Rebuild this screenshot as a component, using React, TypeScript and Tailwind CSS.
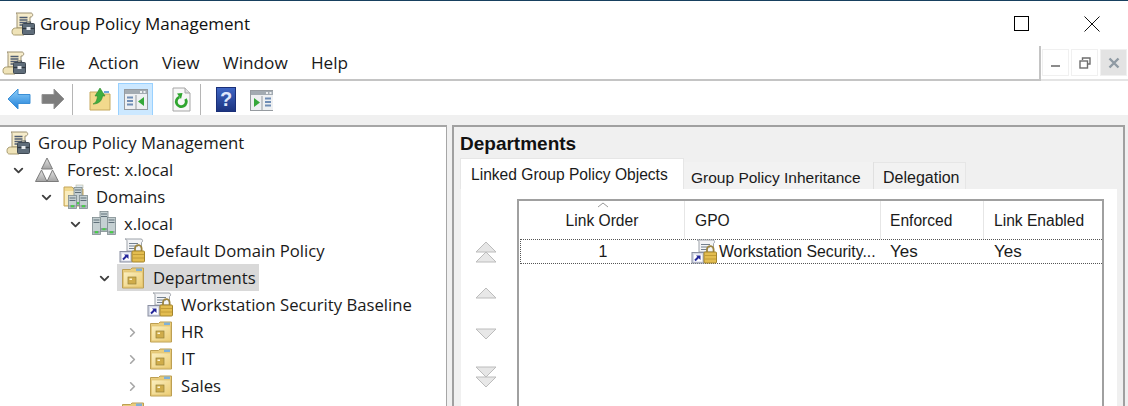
import React from 'react';
import { ChevronDown, ChevronRight } from 'lucide-react';

const ScrollIcon = ({ className = '' }: { className?: string }) => (
  <svg viewBox="0 0 24 24" width="24" height="24" className={className}>
    <path d="M5 1h15c2 0 2.500 3.500 0 4h-1v11H6V3.500C6 2 5.500 1 5 1z" fill="#f6eccb" stroke="#9c9071" strokeWidth="1" />
    <path d="M8.500 5.500h8M8.500 8h8M8.500 10.500h7M8.500 13h3" stroke="#4f5c72" strokeWidth="1.300" />
    <path d="M1 19.500c0-2 1.500-3.500 3.500-3.500H13v7H3.500C1.500 23 1 21.500 1 19.500z" fill="#efe3b8" stroke="#a99c70" strokeWidth="1" />
    <path d="M15.500 11.500v-1.500h4v1.500" fill="none" stroke="#4d5761" strokeWidth="1.200" />
    <rect x="11.500" y="11.500" width="12" height="11" rx="1" fill="#5f6d7a" stroke="#3e4852" strokeWidth="1" />
    <path d="M11.500 16.500h12" stroke="#2f3740" strokeWidth="1.200" />
    <rect x="15.500" y="15" width="4" height="3" fill="#e8ecef" />
  </svg>
);

const ForestIcon = () => (
  <svg viewBox="0 0 24 26" width="24" height="26">
    <defs>
      <linearGradient id="fr" x1="0" y1="0" x2="0" y2="1">
        <stop offset="0" stopColor="#e4e4e4" />
        <stop offset="1" stopColor="#a3a3a3" />
      </linearGradient>
    </defs>
    <path d="M12 1l5.500 11h-11z" fill="url(#fr)" stroke="#7c7c7c" strokeWidth="1" />
    <path d="M6.500 13L12 24.500H.5z" fill="url(#fr)" stroke="#7c7c7c" strokeWidth="1" />
    <path d="M17.500 13L23.500 24.500H12z" fill="url(#fr)" stroke="#7c7c7c" strokeWidth="1" />
  </svg>
);

const Server = ({ x, y, h = 14 }: { x: number; y: number; h?: number }) => (
  <g transform={`translate(${x} ${y})`}>
    <rect x="0" y="0" width="8" height={h} fill="#c5d0d2" stroke="#7d8a8e" strokeWidth="0.8" />
    <path d="M1 2.500h6M1 5h6" stroke="#60707a" strokeWidth="1.100" />
    <rect x="1" y={h - 3.500} width="6" height="2.500" fill="#8f9c9f" />
    <rect x="2.500" y={h - 3.300} width="3" height="2" fill="#45d045" />
  </g>
);

const ServersIcon = () => (
  <svg viewBox="0 0 24 25" width="24" height="25">
    <Server x={8} y={0.500} h={20} />
    <Server x={0.500} y={6.500} h={17} />
    <Server x={15.500} y={6.500} h={17} />
  </svg>
);

const DomainsIcon = () => (
  <svg viewBox="0 0 25 25" width="25" height="25">
    <path d="M1 3h8l2 2h9v17H1z" fill="#f1d98e" stroke="#c5a65a" strokeWidth="1" />
    <path d="M2 7h17v14H2z" fill="#f9ecbd" />
    <rect x="13" y="1" width="7" height="3" fill="#dfe9f0" stroke="#b9b9a0" strokeWidth="0.6" />
    <Server x={11} y={3.500} h={18} />
    <Server x={5.500} y={11.500} h={13} />
    <Server x={16.500} y={11.500} h={13} />
  </svg>
);

const FolderIcon = () => (
  <svg viewBox="0 0 24 24" width="24" height="24">
    <defs>
      <linearGradient id="fd" x1="0" y1="0" x2="1" y2="1">
        <stop offset="0" stopColor="#fbefc0" />
        <stop offset="1" stopColor="#eccd74" />
      </linearGradient>
    </defs>
    <path d="M1.500 3.500h8l1.500-1.500h11.500v20h-21z" fill="#e9cd7c" stroke="#bd9f52" strokeWidth="1" />
    <path d="M2.500 6h19v15h-19z" fill="url(#fd)" stroke="#e0c170" strokeWidth="0.7" />
    <rect x="15" y="2.500" width="6" height="2.500" fill="#7fb0d8" />
    <rect x="7" y="11" width="8" height="7" fill="#cfac4a" stroke="#94803a" strokeWidth="0.7" />
    <rect x="8.500" y="12.500" width="2.500" height="1.500" fill="#fdf6d8" />
  </svg>
);

const GpoLinkIcon = () => (
  <svg viewBox="0 0 26 25" width="26" height="25">
    <path d="M6 1h16c2 0 2 3 .5 3.500V13H8V3C8 2 7 1 6 1z" fill="#f3f4f6" stroke="#9da2a9" strokeWidth="1" />
    <path d="M10 5.500h9M10 8h9M10 10.500h6" stroke="#73808e" strokeWidth="1.200" />
    <rect x="1" y="13.500" width="12" height="10.500" fill="#d5d9e6" stroke="#8a8fa1" strokeWidth="1" />
    <rect x="3" y="15.500" width="8" height="7" fill="#ffffff" />
    <path d="M4 21.500l3.500-3.500" stroke="#23269a" strokeWidth="2" />
    <path d="M5 16.500h4.500V21z" fill="#23269a" />
    <path d="M16 13.500v-3a3.300 3.300 0 0 1 6.600 0v3" fill="none" stroke="#9c843f" strokeWidth="1.800" />
    <rect x="13" y="13" width="12.500" height="11" rx="1" fill="#e3bd50" stroke="#a3842c" strokeWidth="1" />
    <path d="M13.500 16.500h11.500M13.500 20h11.500" stroke="#c29c36" strokeWidth="1" />
  </svg>
);

type RowIcon = 'scroll' | 'forest' | 'domains' | 'servers' | 'gpo' | 'folder';

const iconFor = (icon: RowIcon) => {
  if (icon === 'scroll') return <ScrollIcon />;
  if (icon === 'forest') return <ForestIcon />;
  if (icon === 'domains') return <DomainsIcon />;
  if (icon === 'servers') return <ServersIcon />;
  if (icon === 'gpo') return <GpoLinkIcon />;
  return <FolderIcon />;
};

const rows: { label: string; icon: RowIcon; indent: string; arrow?: 'down' | 'right'; selected?: boolean }[] = [
  { label: 'Group Policy Management', icon: 'scroll', indent: 'pl-[6px]' },
  { label: 'Forest: x.local', icon: 'forest', indent: 'pl-[35px]', arrow: 'down' },
  { label: 'Domains', icon: 'domains', indent: 'pl-[63px]', arrow: 'down' },
  { label: 'x.local', icon: 'servers', indent: 'pl-[92px]', arrow: 'down' },
  { label: 'Default Domain Policy', icon: 'gpo', indent: 'pl-[119px]' },
  { label: 'Departments', icon: 'folder', indent: 'pl-[121px]', arrow: 'down', selected: true },
  { label: 'Workstation Security Baseline', icon: 'gpo', indent: 'pl-[147px]' },
  { label: 'HR', icon: 'folder', indent: 'pl-[149px]', arrow: 'right' },
  { label: 'IT', icon: 'folder', indent: 'pl-[149px]', arrow: 'right' },
  { label: 'Sales', icon: 'folder', indent: 'pl-[149px]', arrow: 'right' },
  { label: 'Group Policy Objects', icon: 'folder', indent: 'pl-[121px]' },
];

const TreeRow = ({ row }: { row: (typeof rows)[number] }) => (
  <div className={`h-[27px] shrink-0 flex items-center ${row.indent}`}>
    <div className={`relative flex items-center h-[27px] pr-[3px] -ml-[4px] pl-[4px] ${row.selected ? 'bg-[#d9d9d9]' : ''}`}>
      {row.arrow === 'down' && (
        <ChevronDown size={15} strokeWidth={3} className="absolute -left-[20px] top-[7px] text-[#404040]" />
      )}
      {row.arrow === 'right' && (
        <ChevronRight size={15} strokeWidth={2.6} className="absolute -left-[20px] top-[7px] text-[#a6a6a6]" />
      )}
      {iconFor(row.icon)}
      <span className="ml-[8px] text-[16.7px] leading-[27px] text-[#1a1a1a] whitespace-nowrap">{row.label}</span>
    </div>
  </div>
);

const Separator = () => <div className="w-px h-[31px] bg-[#b5b5b5]" />;

const WindowPane = ({ side }: { side: 'left' | 'right' }) => (
  <svg viewBox="0 0 24 21" width="24" height="21">
    <rect x="0.500" y="0.500" width="23" height="20" fill="#eef0f2" stroke="#969ba0" />
    <rect x="1" y="1" width="22" height="4" fill="#a3abb2" />
    <rect x="16" y="2" width="2" height="2" fill="#eef0f2" />
    <rect x="19.500" y="2" width="2" height="2" fill="#eef0f2" />
    <path d="M12 6v14" stroke="#969ba0" />
    {side === 'left' ? (
      <>
        <path d="M3 8.500h6M3 12h6M3 15.500h6" stroke="#6f8db5" strokeWidth="2" />
        <path d="M20 8v9l-6-4.500z" fill="#35a83a" />
      </>
    ) : (
      <>
        <path d="M15 8.500h6M15 12h6M15 15.500h6" stroke="#6f8db5" strokeWidth="2" />
        <path d="M4 8v9l6-4.500z" fill="#35a83a" />
      </>
    )}
  </svg>
);

const Toolbar = () => (
  <div className="h-[34px] shrink-0 flex items-center pl-[7px] pt-[2px] bg-white">
    <svg viewBox="0 0 24 22" width="24" height="22">
      <defs>
        <linearGradient id="bl" x1="0" y1="0" x2="0" y2="1">
          <stop offset="0" stopColor="#8fd0fa" />
          <stop offset="1" stopColor="#1f7fd8" />
        </linearGradient>
      </defs>
      <path d="M1 11L11 1v5.500h12v9H11V21z" fill="url(#bl)" stroke="#3b8fd6" />
    </svg>
    <svg viewBox="0 0 24 22" width="24" height="22" className="ml-[10px]">
      <path d="M23 11L13 1v5.500H1v9h12V21z" fill="#7d7d7d" stroke="#959595" />
    </svg>
    <div className="ml-[7px]"><Separator /></div>
    <svg viewBox="0 0 22 24" width="22" height="24" className="ml-[16px]">
      <path d="M1 5h7l2 2h11v16H1z" fill="#f2d98d" stroke="#c6a95e" />
      <path d="M4 17c3-1 4-4 4.500-8H6l5-8 5 8h-2.500c-.5 5-4 8-9.500 8z" fill="#3fae3f" stroke="#2b8a2b" strokeWidth="0.6" />
      <rect x="15" y="4" width="5" height="2" fill="#6fa8dc" />
    </svg>
    <div className="ml-[7px] w-[35px] h-[33px] flex items-center justify-center bg-[#cce8ff] border border-[#99d1ff]">
      <WindowPane side="left" />
    </div>
    <svg viewBox="0 0 19 25" width="19" height="25" className="ml-[19px]">
      <path d="M1 1h12l5 5v18H1z" fill="#f7f7f7" stroke="#a6a6a6" />
      <path d="M13 1v5h5" fill="#dcdcdc" stroke="#a6a6a6" />
      <path d="M7.500 10a5 5 0 1 0 6 2" fill="none" stroke="#2fa52f" strokeWidth="2.800" />
      <path d="M5 6.500l5.500-.5-1.500 6z" fill="#2fa52f" />
    </svg>
    <div className="ml-[9px]"><Separator /></div>
    <div className="ml-[15px] w-[20px] h-[25px] flex items-center justify-center bg-gradient-to-b from-[#3f66c4] to-[#1c3480] border border-[#1a2f78] text-[#dfe7fb] font-bold text-[20px] leading-none font-['Liberation_Sans',sans-serif]">
      ?
    </div>
    <div className="ml-[14px] w-[23px] overflow-hidden mt-[2px]"><WindowPane side="right" /></div>
  </div>
);

const PaneButton = ({ children, active }: { children: React.ReactNode; active?: boolean }) => (
  <div className={`w-[27px] h-[27px] flex items-center justify-center border border-[#f0f0f0] ${active ? 'bg-[#e3e3e3]' : 'bg-white'}`}>
    {children}
  </div>
);

const Arrow = ({ dir, double }: { dir: 'up' | 'down'; double?: boolean }) => {
  const tri = (y: number) =>
    dir === 'up' ? `M11 ${y}l10 10H1z` : `M1 ${y}h20L11 ${y + 10}z`;
  return (
    <svg viewBox="0 0 22 24" width="22" height="24">
      {double && <path d={tri(1)} fill="#e6e6e6" stroke="#bcbcbc" />}
      <path d={double ? tri(11) : tri(7)} fill="#e8e8e8" stroke="#bcbcbc" />
    </svg>
  );
};

const columns = [
  { label: 'Link Order', cls: 'w-[166px] justify-center pl-[1px]' },
  { label: 'GPO', cls: 'w-[196px] pl-[10px]' },
  { label: 'Enforced', cls: 'w-[103px] pl-[9px]' },
  { label: 'Link Enabled', cls: 'flex-1 pl-[10px]' },
];

export default function App() {
  return (
    <div className="w-[1128px] h-[406px] overflow-hidden flex flex-col bg-white font-['Open_Sans',sans-serif]">
      <div className="h-px shrink-0 bg-[#17405f]" />
      {/* title bar */}
      <div className="h-[45px] shrink-0 flex items-center pl-[11px]">
        <ScrollIcon />
        <span className="ml-[5px] pt-[1px] text-[17px] text-[#111] whitespace-nowrap">Group Policy Management</span>
        <div className="ml-auto flex items-center">
          <div className="w-[15px] h-[15px] border border-black mr-[55px]" />
          <svg viewBox="0 0 16 16" width="16" height="16" className="mr-[28px]">
            <path d="M.5.5l15 15M15.500.5l-15 15" stroke="#111" strokeWidth="1" />
          </svg>
        </div>
      </div>
      {/* menu */}
      <div className="h-[35px] shrink-0 flex">
        <div className="flex-1 flex items-center pl-[2px] border-b-2 border-r-2 border-[#c4c4c4]">
          <ScrollIcon />
          <div className="ml-[12px] flex gap-[23.2px] text-[17.2px] text-[#1a1a1a]">
            <span>File</span>
            <span>Action</span>
            <span>View</span>
            <span>Window</span>
            <span>Help</span>
          </div>
        </div>
        <div className="w-[87px] pl-[1px] pt-[3px] flex gap-[2px] border-b-2 border-[#e4e4e4]">
          <PaneButton>
            <div className="w-[9px] h-[2px] mt-[6px] bg-[#8b8b8b]" />
          </PaneButton>
          <PaneButton>
            <svg viewBox="0 0 12 12" width="12" height="12">
              <path d="M3.500 3V1h7.500v6h-2" fill="none" stroke="#6e6e6e" strokeWidth="1.400" />
              <rect x="1" y="4" width="7.500" height="7" fill="none" stroke="#6e6e6e" strokeWidth="1.400" />
            </svg>
          </PaneButton>
          <PaneButton active>
            <svg viewBox="0 0 12 12" width="12" height="12">
              <path d="M1.500 1.500l9 9M10.500 1.500l-9 9" stroke="#8f9aa3" strokeWidth="2.400" />
            </svg>
          </PaneButton>
        </div>
      </div>
      <Toolbar />
      <div className="h-[10px] shrink-0 bg-[#f0f0f0]" />
      {/* panes */}
      <div className="flex-1 flex min-h-0 bg-[#f0f0f0]">
        <div className="w-[447px] flex flex-col overflow-hidden bg-white border-t-2 border-r border-[#a6a6a6] pt-[2px]">
          {rows.map(r => <TreeRow key={r.label} row={r} />)}
        </div>
        <div className="w-[5px]" />
        <div className="w-[673px] flex flex-col border-2 border-b-0 border-[#a0a0a0] pl-[6px] pr-[6px] font-['Liberation_Sans',sans-serif]">
          <div className="h-[31px] shrink-0 pt-[5px] font-bold text-[19px] leading-[24px] text-[#111]">Departments</div>
          <div className="h-[31px] shrink-0 flex items-end">
            <div className="w-[224px] h-[31px] bg-white border border-b-0 border-[#e6e6e6] pl-[10px] pt-[5px] text-[15.6px] leading-[21px] text-[#1a1a1a]">
              Linked Group Policy Objects
            </div>
            <div className="w-[190px] h-[27px] bg-[#f2f2f2] border-r border-[#e0e0e0] pl-[7px] pt-[5px] text-[15.5px] leading-[21px] text-[#1a1a1a] whitespace-nowrap">
              Group Policy Inheritance
            </div>
            <div className="w-[92px] h-[27px] bg-[#f2f2f2] border-t border-r border-[#e6e6e6] pl-[9px] pt-[4px] text-[16px] leading-[21px] text-[#1a1a1a]">
              Delegation
            </div>
          </div>
          <div className="flex-1 min-h-0 bg-white flex pt-[10px] pr-[13px] border-l border-[#f0f0f0]">
            <div className="w-[56px] shrink-0 flex flex-col items-center pt-[42px] pr-[6px]">
              <Arrow dir="up" double />
              <div className="mt-[16px]"><Arrow dir="up" /></div>
              <div className="mt-[17px]"><Arrow dir="down" /></div>
              <div className="mt-[20px]"><Arrow dir="down" double /></div>
            </div>
            <div className="flex-1 border-2 border-b-0 border-[#a0a0a0] text-[15.6px] text-[#1a1a1a]">
              <div className="relative h-[38px] flex items-center">
                <svg viewBox="0 0 12 6" width="12" height="6" className="absolute left-[78px] top-[1px]">
                  <path d="M1 5l5-4 5 4" fill="none" stroke="#9a9a9a" strokeWidth="1" />
                </svg>
                {columns.map(c => (
                  <div key={c.label} className={`h-[38px] flex items-center pt-[2px] border-r border-[#e6e6e6] last:border-r-0 ${c.cls}`}>
                    {c.label}
                  </div>
                ))}
              </div>
              <div className="h-[25px] ml-[1px] flex items-center border-y border-l border-dotted border-[#555]">
                <div className="w-[164px] text-center text-[16px]">1</div>
                <div className="w-[196px] flex items-center pl-[6px] whitespace-nowrap">
                  <GpoLinkIcon />
                  <span className="ml-[2px] text-[15.8px]">Workstation Security...</span>
                </div>
                <div className="w-[103px] pl-[9px] text-[17px]">Yes</div>
                <div className="pl-[10px] text-[17px]">Yes</div>
              </div>
            </div>
          </div>
        </div>
      </div>
    </div>
  );
}
